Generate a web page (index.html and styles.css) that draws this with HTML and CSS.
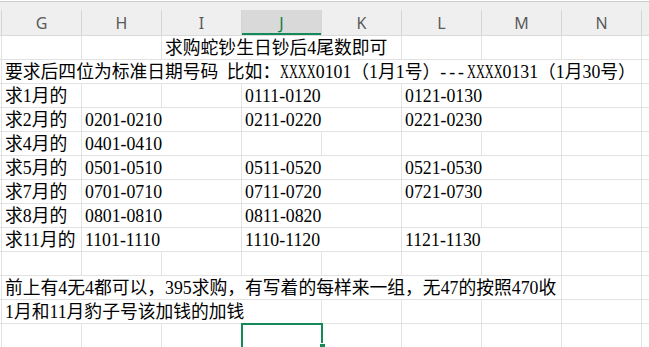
FILE: index.html
```html
<!DOCTYPE html>
<html lang="zh-CN">
<head>
<meta charset="utf-8">
<title>Sheet</title>
<link rel="stylesheet" href="styles.css">
</head>
<body>
<div class="sheet">
  <div class="topband"></div>
  <div class="heads">
    <div class="corner"></div>
    <div class="h">G</div><div class="h">H</div><div class="h">I</div><div class="h active">J</div>
    <div class="h">K</div><div class="h">L</div><div class="h">M</div><div class="h">N</div>
    <div class="h tail"></div>
  </div>
  <div class="grid">
    <div class="r"><div class="corner"></div><div class="c"></div><div class="c"></div><div class="c o">求购蛇钞生日钞后4尾数即可</div><div class="c o"></div><div class="c"></div><div class="c"></div><div class="c"></div><div class="c"></div><div class="c t"></div></div>
    <div class="r"><div class="corner"></div><div class="c o wide">要求后四位为标准日期号码 比如：<span class="xx">XXXX</span>0101（1月1号）<span class="dash">---</span><span class="xx">XXXX</span>0131（1月30号）</div><div class="c o"></div><div class="c o"></div><div class="c o"></div><div class="c o"></div><div class="c o"></div><div class="c o"></div><div class="c"></div><div class="c t"></div></div>
    <div class="r"><div class="corner"></div><div class="c">求1月的</div><div class="c"></div><div class="c"></div><div class="c o">0111-0120</div><div class="c"></div><div class="c o">0121-0130</div><div class="c"></div><div class="c"></div><div class="c t"></div></div>
    <div class="r"><div class="corner"></div><div class="c">求2月的</div><div class="c o">0201-0210</div><div class="c"></div><div class="c o">0211-0220</div><div class="c"></div><div class="c o">0221-0230</div><div class="c"></div><div class="c"></div><div class="c t"></div></div>
    <div class="r"><div class="corner"></div><div class="c">求4月的</div><div class="c o">0401-0410</div><div class="c"></div><div class="c"></div><div class="c"></div><div class="c"></div><div class="c"></div><div class="c"></div><div class="c t"></div></div>
    <div class="r"><div class="corner"></div><div class="c">求5月的</div><div class="c o">0501-0510</div><div class="c"></div><div class="c o">0511-0520</div><div class="c"></div><div class="c o">0521-0530</div><div class="c"></div><div class="c"></div><div class="c t"></div></div>
    <div class="r"><div class="corner"></div><div class="c">求7月的</div><div class="c o">0701-0710</div><div class="c"></div><div class="c o">0711-0720</div><div class="c"></div><div class="c o">0721-0730</div><div class="c"></div><div class="c"></div><div class="c t"></div></div>
    <div class="r"><div class="corner"></div><div class="c">求8月的</div><div class="c o">0801-0810</div><div class="c"></div><div class="c o">0811-0820</div><div class="c"></div><div class="c"></div><div class="c"></div><div class="c"></div><div class="c t"></div></div>
    <div class="r"><div class="corner"></div><div class="c">求11月的</div><div class="c o">1101-1110</div><div class="c"></div><div class="c o">1110-1120</div><div class="c"></div><div class="c o">1121-1130</div><div class="c"></div><div class="c"></div><div class="c t"></div></div>
    <div class="r"><div class="corner"></div><div class="c"></div><div class="c"></div><div class="c"></div><div class="c"></div><div class="c"></div><div class="c"></div><div class="c"></div><div class="c"></div><div class="c t"></div></div>
    <div class="r"><div class="corner"></div><div class="c o">前上有4无4都可以，395求购，有写着的每样来一组，无47的按照470收</div><div class="c o"></div><div class="c o"></div><div class="c o"></div><div class="c o"></div><div class="c o"></div><div class="c"></div><div class="c"></div><div class="c t"></div></div>
    <div class="r"><div class="corner"></div><div class="c o">1月和11月豹子号该加钱的加钱</div><div class="c o"></div><div class="c o"></div><div class="c"></div><div class="c"></div><div class="c"></div><div class="c"></div><div class="c"></div><div class="c t"></div></div>
    <div class="r"><div class="corner"></div><div class="c"></div><div class="c"></div><div class="c"></div><div class="c"></div><div class="c"></div><div class="c"></div><div class="c"></div><div class="c"></div><div class="c t"></div></div>
    <div class="sel"></div>
  </div>
</div>
</body>
</html>
```

FILE: styles.css
```css
html, body {
  margin: 0;
  padding: 0;
  background: #ffffff;
}
.sheet {
  width: 649px;
  height: 347px;
  overflow: hidden;
}
.topband {
  margin-top: 1px;
  border-top: 1px solid #cccccc;
  height: 8px;
  background: #efefef;
}
.heads {
  display: grid;
  grid-template-columns: 2px repeat(8, 80px) 1fr;
  height: 26px;
  box-sizing: border-box;
  background: #efefef;
  border-bottom: 1px solid #dadada;
}
.heads .corner {
  border-right: 1px solid #d6d6d6;
}
.h {
  border-right: 1px solid #d6d6d6;
  text-align: center;
  font-family: "Noto Sans", "Open Sans", sans-serif;
  font-size: 16px;
  line-height: 24px;
  padding-top: 1px;
  color: #5a5a5a;
}
.h.tail {
  border-right: none;
}
.h.active {
  background: #d9d9d9;
  color: #107c41;
  box-shadow: inset 0 -2px 0 #138a58;
}
.grid {
  position: relative;
}
.r {
  display: grid;
  grid-template-columns: 2px repeat(8, 80px) 1fr;
  height: 24px;
  box-sizing: border-box;
  border-bottom: 1px solid #e2e2e2;
}
.r .corner {
  border-right: 1px solid #e2e2e2;
}
.c {
  border-right: 1px solid #e2e2e2;
  padding: 1px 0 0 3px;
  font-family: "Liberation Serif", "Noto Sans CJK SC", serif;
  font-size: 17.8px;
  line-height: 23px;
  color: #000;
  white-space: nowrap;
  min-width: 0;
}
.c.o {
  border-right-color: transparent;
  overflow: visible;
}
.c.t {
  border-right: none;
}
.wide {
  word-spacing: 4px;
}
.xx {
  display: inline-block;
  transform: scaleX(0.6925);
  transform-origin: 0 0;
  margin-right: -0.888em;
}
.dash {
  letter-spacing: 0.167em;
}
.sel {
  position: absolute;
  left: 241px;
  top: 287px;
  width: 82px;
  height: 32px;
  box-sizing: border-box;
  border: 2px solid #138a58;
}
.sel::after {
  content: "";
  position: absolute;
  left: 76px;
  top: 18px;
  width: 5px;
  height: 5px;
  background: #138a58;
  border: 1px solid #ffffff;
}
```
